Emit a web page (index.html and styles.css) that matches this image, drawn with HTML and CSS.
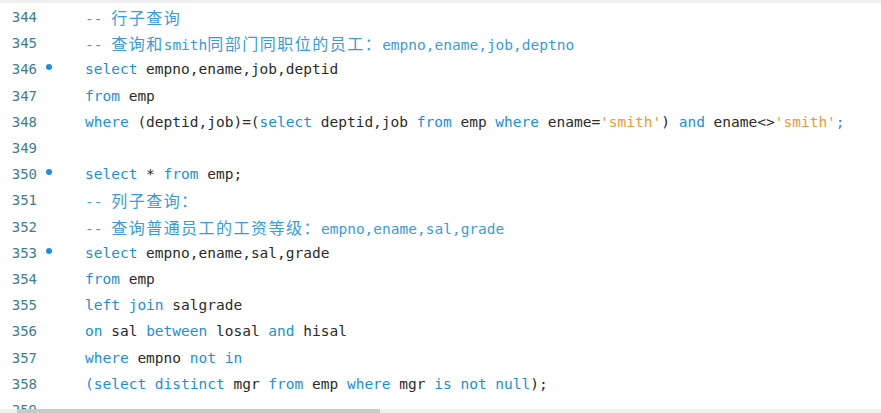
FILE: index.html
```html
<!DOCTYPE html>
<html>
<head>
<meta charset="utf-8">
<link rel="stylesheet" href="styles.css">
</head>
<body>
<div class="topbar"></div>
<div class="editor">
  <div class="line"><span class="num">344</span><span class="mark"></span><span class="code"><span class="c">-- <span class="cj">行子查询</span></span></span></div>
  <div class="line"><span class="num">345</span><span class="mark"></span><span class="code"><span class="c">-- <span class="cj">查询和</span>smith<span class="cj">同部门同职位的员工：</span>empno,ename,job,deptno</span></span></div>
  <div class="line"><span class="num">346</span><span class="mark on"></span><span class="code"><span class="k">select</span> empno,ename,job,deptid</span></div>
  <div class="line"><span class="num">347</span><span class="mark"></span><span class="code"><span class="k">from</span> emp</span></div>
  <div class="line"><span class="num">348</span><span class="mark"></span><span class="code"><span class="k">where</span> (deptid,job)=(<span class="k">select</span> deptid,job <span class="k">from</span> emp <span class="k">where</span> ename=<span class="s">'smith'</span>) <span class="k">and</span> ename&lt;&gt;<span class="s">'smith'</span><span class="k">;</span></span></div>
  <div class="line"><span class="num">349</span><span class="mark"></span><span class="code"></span></div>
  <div class="line"><span class="num">350</span><span class="mark on"></span><span class="code"><span class="k">select</span> * <span class="k">from</span> emp;</span></div>
  <div class="line"><span class="num">351</span><span class="mark"></span><span class="code"><span class="c">-- <span class="cj">列子查询：</span></span></span></div>
  <div class="line"><span class="num">352</span><span class="mark"></span><span class="code"><span class="c">-- <span class="cj">查询普通员工的工资等级：</span>empno,ename,sal,grade</span></span></div>
  <div class="line"><span class="num">353</span><span class="mark on"></span><span class="code"><span class="k">select</span> empno,ename,sal,grade</span></div>
  <div class="line"><span class="num">354</span><span class="mark"></span><span class="code"><span class="k">from</span> emp</span></div>
  <div class="line"><span class="num">355</span><span class="mark"></span><span class="code"><span class="k">left join</span> salgrade</span></div>
  <div class="line"><span class="num">356</span><span class="mark"></span><span class="code"><span class="k">on</span> sal <span class="k">between</span> losal <span class="k">and</span> hisal</span></div>
  <div class="line"><span class="num">357</span><span class="mark"></span><span class="code"><span class="k">where</span> empno <span class="k">not in</span></span></div>
  <div class="line"><span class="num">358</span><span class="mark"></span><span class="code"><span class="k">(select distinct</span> mgr <span class="k">from</span> emp <span class="k">where</span> mgr <span class="k">is not null</span>);</span></div>
  <div class="line"><span class="num">359</span><span class="mark"></span><span class="code"></span></div>
</div>
<div class="hscroll"><div class="thumb"></div></div>
</body>
</html>
```
FILE: styles.css
```css
html, body {
  margin: 0;
  padding: 0;
  background: #ffffff;
}
body {
  width: 881px;
  height: 413px;
  overflow: hidden;
  display: flex;
  flex-direction: column;
}
.topbar {
  height: 3px;
  background: #f0f0f0;
  flex: none;
}
.editor {
  flex: 1;
  overflow: hidden;
  padding-top: 1px;
  font-family: "DejaVu Sans Mono", "Liberation Mono", "Noto Sans CJK SC", monospace;
  font-size: 14.5px;
  color: #2b2b2b;
}
.line {
  height: 26.2px;
  display: flex;
  align-items: center;
  white-space: pre;
}
.num {
  width: 37px;
  flex: none;
  text-align: right;
  color: #3f7d8e;
  font-size: 14px;
}
.mark {
  width: 48px;
  flex: none;
  display: flex;
  align-items: center;
  padding-left: 9px;
  box-sizing: border-box;
}
.mark.on::before {
  content: "";
  width: 6px;
  height: 6px;
  border-radius: 50%;
  background: #1f8ee0;
  margin-top: -4px;
}
.code {
  flex: none;
}
.k {
  color: #1c8fd4;
}
.c {
  color: #3b9bd8;
}
.s {
  color: #e89a3c;
}
.cj {
  font-family: "Noto Sans CJK SC", sans-serif;
  font-size: 16px;
  letter-spacing: 1.48px;
}
.hscroll {
  height: 4px;
  flex: none;
  background: #f1f1f1;
  display: flex;
}
.thumb {
  margin-left: 17px;
  width: 363px;
  background: #c9c9c9;
}
```
